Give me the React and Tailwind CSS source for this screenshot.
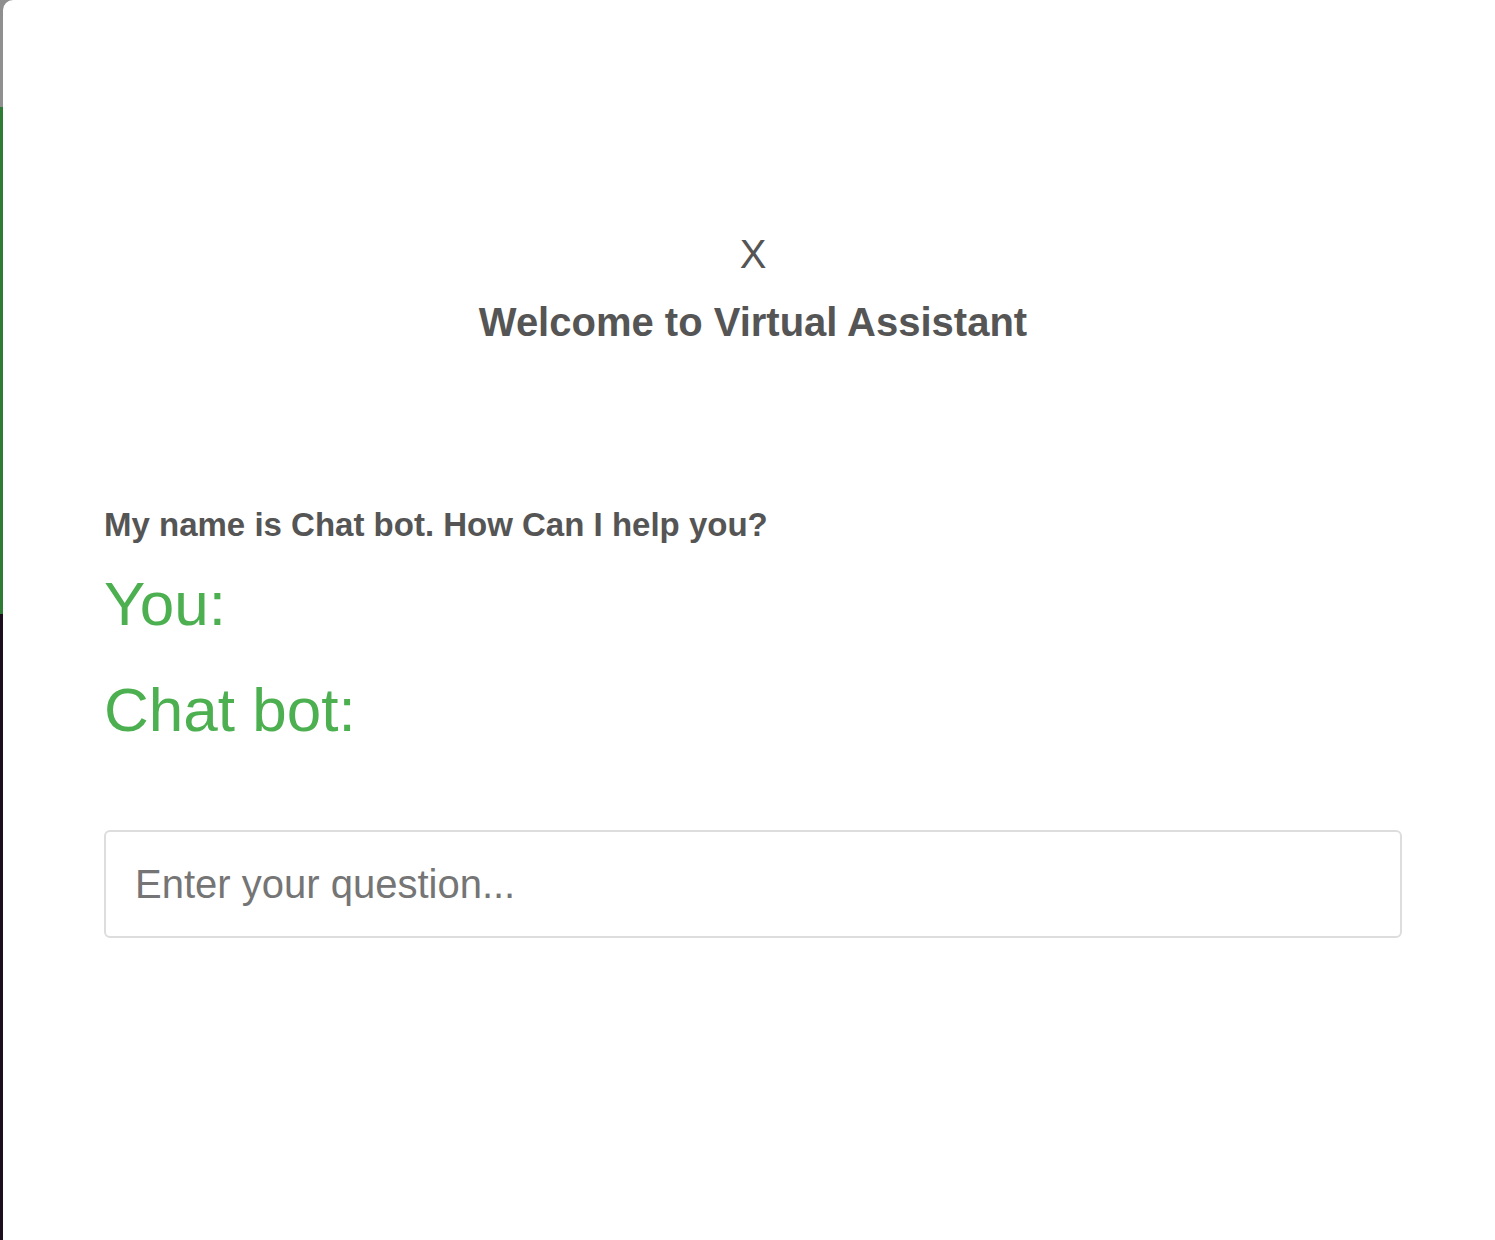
import React, { useState } from 'react'

export default function App() {
  const [question, setQuestion] = useState('')

  return (
    <div className="flex h-[1240px] w-full bg-[#8f8f8f] font-['Liberation_Sans',Arial,sans-serif]">
      {/* left edge strip */}
      <div className="flex w-[3px] flex-col">
        <div className="h-[107px] bg-[#8f8f8f]" />
        <div className="h-[507px] bg-[#2f7a35]" />
        <div className="flex-1 bg-[#1b0f1f]" />
      </div>

      {/* Chat panel */}
      <div className="flex-1 rounded-tl-[10px] bg-white">
        <div className="ml-[101px] w-[1298px] pt-[230px]">
          <div className="flex flex-col items-center text-[#555555]">
            <button className="text-[40px] leading-[48px]">X</button>
            <h2 className="mt-[20px] text-[40px] font-bold leading-[48px]">Welcome to Virtual Assistant</h2>
          </div>

          <p className="mt-[155px] whitespace-nowrap text-[33px] font-bold leading-[48px] text-[#555555]">
            My name is Chat bot. How Can I help you?
          </p>

          <div className="mt-[20px] text-[62px] leading-[70px] text-[#4caf50]">You:</div>
          <div className="mt-[36px] text-[62px] leading-[70px] text-[#4caf50]">Chat bot:</div>

          <input
            type="text"
            value={question}
            onChange={e => setQuestion(e.target.value)}
            placeholder="Enter your question..."
            className="mt-[85px] h-[108px] w-full rounded-[6px] border-2 border-[#dddddd] px-[29px] text-[40px] text-[#555555] outline-none placeholder:text-[#757575]"
          />
        </div>
      </div>
    </div>
  )
}
